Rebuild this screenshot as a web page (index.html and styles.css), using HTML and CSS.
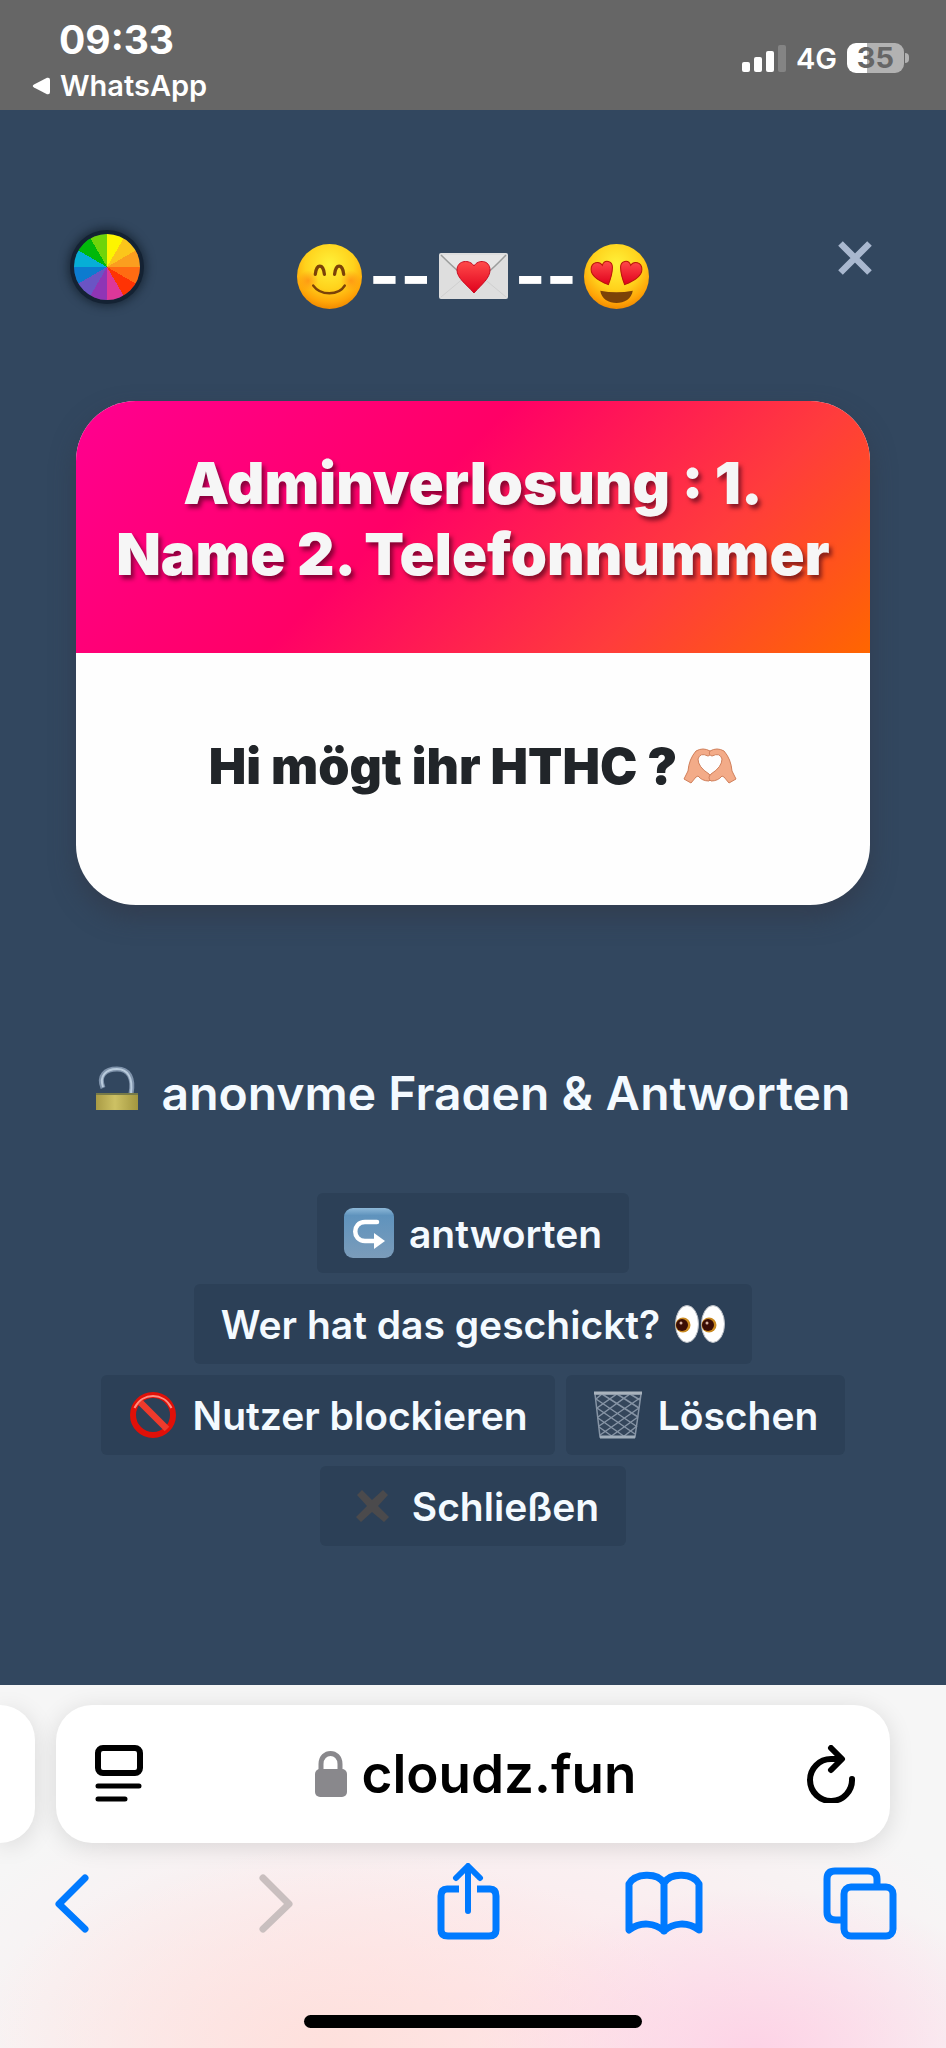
FILE: index.html
```html
<!DOCTYPE html>
<html lang="de">
<head>
    <meta charset="UTF-8">
    <meta name="viewport" content="width=device-width, initial-scale=1.0">
    <title>cloudz.fun</title>
    <link rel="stylesheet" href="styles.css">
</head>
<body>
    <!-- status bar -->
    <div class="status">
        <div class="status-left">
            <div class="time">09:33</div>
            <a class="back-app" href="#">
                <svg width="18" height="18" viewBox="0 0 18 18"><path d="M2 7.5 15 .8Q18 0 18 3v12q0 3-3 2.200L2 10.500Q-.5 9 2 7.500z" fill="#fff"/></svg>
                <span>WhatsApp</span>
            </a>
        </div>
        <div class="status-right">
            <svg width="44" height="27" viewBox="0 0 44 27" fill="#fff">
                <rect x="0" y="17" width="8" height="10" rx="2"/>
                <rect x="12" y="12" width="8" height="15" rx="2"/>
                <rect x="24" y="6" width="8" height="21" rx="2"/>
                <rect x="36" y="0" width="8" height="27" rx="2" opacity=".2"/>
            </svg>
            <span>4G</span>
            <div class="battery"><span>35</span></div>
        </div>
    </div>

    <main>
        <header>
            <button class="wheel" aria-label="Farbe"></button>
            <h1>
                <svg width="65" height="65" viewBox="0 0 64 64">
                    <defs>
                        <radialGradient id="face" cx=".5" cy=".32" r=".68">
                            <stop offset="0" stop-color="#fff23a"/>
                            <stop offset=".55" stop-color="#ffd21c"/>
                            <stop offset=".85" stop-color="#ffa508"/>
                            <stop offset="1" stop-color="#f08a00"/>
                        </radialGradient>
                        <radialGradient id="cheek">
                            <stop offset="0" stop-color="#ff7a10" stop-opacity=".6"/>
                            <stop offset="1" stop-color="#ff7a10" stop-opacity="0"/>
                        </radialGradient>
                        <linearGradient id="heart" x1="0" y1="0" x2="0" y2="1">
                            <stop offset="0" stop-color="#ff4a4a"/>
                            <stop offset="1" stop-color="#e0001c"/>
                        </linearGradient>
                    </defs>
                    <circle cx="32" cy="32" r="32" fill="url(#face)"/>
                    <circle cx="11" cy="36" r="10" fill="url(#cheek)"/>
                    <circle cx="53" cy="36" r="10" fill="url(#cheek)"/>
                    <path d="M18 30C19 19 26 19 27 30M37 30C38 19 45 19 46 30" fill="none" stroke="#7b4208" stroke-width="3.200" stroke-linecap="round"/>
                    <path d="M16 41C23 51 41 51 47 41" fill="none" stroke="#7b4208" stroke-width="2.500" stroke-linecap="round"/>
                </svg>
                <span>--</span>
                <svg width="69" height="46" viewBox="0 0 69 46">
                    <rect width="69" height="46" rx="2" fill="#dedede"/>
                    <path d="M2 44 26 24M67 44 43 24" stroke="#cfcfcf" fill="none"/>
                    <path d="M2 2Q28 28 35 28T67 2" fill="#e6e6e6" stroke="#9b9d9c" stroke-width="1.500"/>
                    <path d="M35 40C27 31 18 25 18 17 18 7 31 6 35 13 39 6 51 7 51 17 51 25 43 31 35 40z" fill="url(#heart)" stroke="#c80d22"/>
                </svg>
                <span>--</span>
                <svg width="65" height="65" viewBox="0 0 64 64">
                    <circle cx="32" cy="32" r="32" fill="url(#face)"/>
                    <path d="M24 40C14 36 7 31 7 25 7 18 15 16 18 21 20 15 28 16 28 23 28 30 26 35 24 40z" fill="url(#heart)" stroke="#b8160a"/>
                    <path d="M40 40C50 36 57 31 57 25 57 18 49 16 46 21 44 15 36 16 36 23 36 30 38 35 40 40z" fill="url(#heart)" stroke="#b8160a"/>
                    <path d="M16 46Q32 49 48 46C46 62 18 62 16 46z" fill="#7b4208"/>
                </svg>
            </h1>
            <button class="close" aria-label="Schließen">
                <svg width="34" height="34" viewBox="0 0 34 34"><path d="M2.500 2.500 31.500 31.500M31.500 2.500 2.500 31.500" stroke="#a9b8cf" stroke-width="6.500"/></svg>
            </button>
        </header>

        <section class="card">
            <h2>Adminverlosung : 1. Name 2. Telefonnummer</h2>
            <p>
                <span>Hi mögt ihr HTHC ?</span>
                <svg width="54" height="36" viewBox="0 0 54 36" fill="#f3ab88" stroke="#d07f5a" stroke-width="1">
                    <path d="M1 31 5 23Q6 11 13 3 20-1 27 3 29 7 25 8 17 4 15 11 15 19 26 26 30 30 26 33 19 33 15 28L13 29 8 35z"/>
                    <path d="M53 31 49 23Q48 11 41 3 34-1 27 3 25 7 29 8 37 4 39 11 39 19 28 26 24 30 28 33 35 33 39 28L41 29 46 35z"/>
                </svg>
            </p>
        </section>

        <div class="ticker">
            <svg width="42" height="62" viewBox="0 0 42 62">
                <defs>
                    <linearGradient id="brass">
                        <stop offset="0" stop-color="#a99b45"/>
                        <stop offset=".45" stop-color="#cdc164"/>
                        <stop offset="1" stop-color="#a2963f"/>
                    </linearGradient>
                </defs>
                <path d="M7 22C2 10 9 3 21 3S38 12 35 28" fill="none" stroke="#7f93ab" stroke-width="5"/>
                <path d="M7 21C3 10 10 3 21 3S37 12 35 27" fill="none" stroke="#b9cbdc" stroke-width="2"/>
                <rect y="27" width="42" height="34" rx="2" fill="url(#brass)"/>
                <path d="M0 28H42" stroke="#777a48" stroke-width="2"/>
            </svg>
            <span>anonyme Fragen &amp; Antworten</span>
        </div>

        <div class="actions">
            <button>
                <svg width="50" height="50" viewBox="0 0 50 50">
                    <defs>
                        <linearGradient id="tile" x1="0" y1="0" x2="0" y2="1">
                            <stop offset="0" stop-color="#8db8d8"/>
                            <stop offset=".15" stop-color="#5f93bd"/>
                            <stop offset="1" stop-color="#7b9cba"/>
                        </linearGradient>
                    </defs>
                    <rect width="50" height="50" rx="9" fill="url(#tile)"/>
                    <path d="M33 14H21C8 14 8 33 21 33H31" fill="none" stroke="#fff" stroke-width="4.500" stroke-linecap="round"/>
                    <path d="M30 25 41 33 30 41z" fill="#fff"/>
                </svg>
                <span>antworten</span>
            </button>
            <button>
                <span>Wer hat das geschickt?</span>
                <svg width="50" height="38" viewBox="0 0 50 38">
                    <ellipse cx="12" cy="19" rx="11.500" ry="18.500" fill="#fff" stroke="#b9bdc4"/>
                    <ellipse cx="38" cy="19" rx="11.500" ry="18.500" fill="#fff" stroke="#b9bdc4"/>
                    <circle cx="8" cy="20" r="7.500" fill="#c98a22"/><circle cx="7" cy="20" r="6" fill="#3a0d05"/>
                    <circle cx="34" cy="20" r="7.500" fill="#c98a22"/><circle cx="33" cy="20" r="6" fill="#3a0d05"/>
                    <circle cx="6" cy="18" r="1.500" fill="#d9b3a0"/><circle cx="32" cy="18" r="1.500" fill="#d9b3a0"/>
                </svg>
            </button>
            <button>
                <svg width="50" height="50" viewBox="0 0 50 50" fill="none">
                    <circle cx="25" cy="25" r="20" stroke="#e01008" stroke-width="6"/>
                    <path d="M11 11 39 39" stroke="#ef3a2c" stroke-width="6.500"/>
                    <path d="M6.500 18C14 2 36 2 43.500 18" stroke="#ff8c80" stroke-width="2"/>
                </svg>
                <span>Nutzer blockieren</span>
            </button>
            <button>
                <svg width="50" height="50" viewBox="0 0 50 50" fill="none" stroke="#8694a5" stroke-width="1.500">
                    <path d="M2 4 7 47H42L48 4z" fill="#34465b"/>
                    <path d="M3 9 9 4 45 27M4 18 24 4 46 18M5 27 37 4 47 10M6 36 47 8M7 45 46 18M17 47 45 27M30 47 44 36M6 37 20 47M5 28 32 47M4 18 42 44M3 9 43 36"/>
                    <path d="M1 3H49" stroke="#a9b3bd" stroke-width="3"/>
                    <path d="M7 47H42" stroke="#a0adba" stroke-width="3"/>
                </svg>
                <span>Löschen</span>
            </button>
            <button>
                <svg width="50" height="50" viewBox="0 0 50 50"><path d="M10 14 15 9 25 19 36 9 41 14 31 25 42 36 37 41 25 31 14 41 9 36 20 25z" fill="#4b4a4c"/></svg>
                <span>Schließen</span>
            </button>
        </div>
    </main>

    <!-- browser bar -->
    <footer>
        <div class="tabs">
            <div class="tab-prev"></div>
            <div class="address">
                <button aria-label="Seitenmenü">
                    <svg width="50" height="58" viewBox="0 0 50 58" fill="none" stroke="#000" stroke-width="6" stroke-linecap="round">
                        <rect x="4" y="3" width="42" height="25" rx="5"/>
                        <path d="M4 41H45M4 54H31" stroke-width="5"/>
                    </svg>
                </button>
                <a href="#">
                    <svg width="34" height="46" viewBox="0 0 34 46"><path d="M7 20V13C7-1 26-1 26 13V20" fill="none" stroke="#89888c" stroke-width="5"/><rect x="1" y="18" width="32" height="28" rx="5" fill="#89888c"/></svg>
                    <span>cloudz.fun</span>
                </a>
                <button aria-label="Neu laden">
                    <svg width="50" height="58" viewBox="0 0 50 58" fill="none" stroke="#000" stroke-width="6" stroke-linecap="round" stroke-linejoin="round">
                        <path d="M46 34A21 21 0 1 1 25 14H34"/>
                        <path d="M25 3 36 14 25 25"/>
                    </svg>
                </button>
            </div>
        </div>
        <nav>
            <button aria-label="Zurück"><svg width="80" height="80" viewBox="0 0 80 80"><path d="M53 15 27 41 53 66"/></svg></button>
            <button aria-label="Vorwärts" disabled><svg width="80" height="80" viewBox="0 0 80 80"><path d="M34 15 60 41 34 66"/></svg></button>
            <button aria-label="Teilen"><svg width="80" height="80" viewBox="0 0 80 80"><path d="M33 26H21Q15 26 15 33V67Q15 73 22 73H63Q70 73 70 67V33Q70 26 64 26H51" stroke-linecap="butt"/><path d="M42 48V4M30 15 42 3 54 15" stroke-width="6"/></svg></button>
            <button aria-label="Lesezeichen"><svg width="80" height="80" viewBox="0 0 80 80"><path d="M41 68C32 60 18 58 6 67V21C12 10 34 9 41 20 48 9 70 10 76 21V67C64 58 50 60 41 68zM41 20V68"/></svg></button>
            <button aria-label="Tabs"><svg width="80" height="80" viewBox="0 0 80 80"><path d="M22 57H16Q7 57 7 49V16Q7 8 15 8H48Q57 8 57 16V24" stroke-linecap="butt"/><rect x="24" y="24" width="49" height="49" rx="7"/></svg></button>
        </nav>
        <div class="home"></div>
    </footer>
</body>
</html>
```
FILE: styles.css
```css
* {margin: 0; padding: 0; box-sizing: border-box;}
body {min-height: 100vh; display: flex; flex-direction: column; background-color: #32475f; color: #f4faff; font-family: Inter, "Liberation Sans", sans-serif; overflow-x: hidden;}
button {background: none; border: none; font: inherit; color: inherit; cursor: pointer;}
a {color: inherit; text-decoration: none;}
svg {display: block; flex: none;}

/* status bar */
.status {height: 110px; padding: 16px 42px 0 32px; display: flex; justify-content: space-between; background-color: #666666; color: #ffffff; font-weight: 600; font-size: 29px;}
.status .time {padding-left: 27px; font-size: 39px; font-weight: 700; line-height: 48px;}
.status .back-app {display: flex; align-items: center; gap: 10px; line-height: 44px;}
.status-right {height: 84px; display: flex; align-items: center; gap: 10px;}
.battery {position: relative; width: 57px; height: 30px; border-radius: 9px; background: linear-gradient(90deg, #ffffff 35%, #b2b2b2 35%); color: #666666; font-weight: 700; line-height: 30px; text-align: center;}
.battery::after {content: ""; position: absolute; left: 58px; top: 10px; width: 4px; height: 10px; border-radius: 0 4px 4px 0; background-color: #b2b2b2;}

main {flex: 1; padding: 122px 76px 80px;}
header {margin: 0 -2px; display: grid; grid-template-columns: 1fr auto 1fr; align-items: start;}
.wheel {width: 66px; height: 66px; margin-top: 2px; border-radius: 50%; box-shadow: 0 0 0 4px #142233, 0 0 10px 6px rgba(10, 20, 30, 0.6); background: conic-gradient(#fdf500 30deg, #fbc51b 30deg 60deg, #fb9e1f 60deg 90deg, #ff6b12 90deg 120deg, #ff3304 120deg 150deg, #dd3799 150deg 180deg, #8f35b5 180deg 210deg, #6a54c4 210deg 240deg, #0c7bcf 240deg 270deg, #06aed6 270deg 300deg, #00b80a 300deg 330deg, #6fd40a 330deg);}
h1 {height: 88px; display: flex; align-items: center; gap: 7px; color: #ffffff; font-size: 67px; font-weight: 700; line-height: 88px;}
.close {height: 52px; display: flex; align-items: center; justify-self: end;}

.card {margin-top: 81px; border-radius: 60px; overflow: hidden; background-color: #fefefe; box-shadow: 0 12px 24px rgba(50, 55, 70, 0.6); text-align: center;}
.card h2 {min-height: 252px; padding: 47px 30px 63px; background: linear-gradient(135deg, #ff0090, #ff0066 42%, #ff3c3c 74%, #ff6600); color: #f6f6f6; font-size: 58px; font-weight: 900; line-height: 71px; text-shadow: 3px 4px 4px rgba(60, 0, 20, 0.6);}
.card p {height: 252px; padding-bottom: 26px; display: flex; justify-content: center; align-items: center; gap: 6px; color: #212529; font-size: 50px; font-weight: 900;}

/* the line is cut at the baseline */
.ticker {height: 50px; margin-top: 155px; display: flex; justify-content: center; align-items: flex-start; gap: 24px; overflow: hidden; font-size: 48px; font-weight: 600; line-height: 68px; white-space: nowrap;}
.ticker svg {margin-top: 6px;}

.actions {margin-top: 83px; display: flex; flex-wrap: wrap; justify-content: center; gap: 11px;}
.actions button {height: 80px; padding: 0 27px; display: flex; align-items: center; gap: 15px; border-radius: 6px; background-color: #2c4057; font-size: 39px; font-weight: 600;}

/* browser bar */
footer {height: 363px; display: flex; flex-direction: column; padding-top: 20px; background: radial-gradient(ellipse 280px 160px at 80% 100%, #fdd3e6, transparent), radial-gradient(ellipse 360px 200px at 35% 100%, #fee0dc, transparent), radial-gradient(ellipse 60% 70% at 50% 90%, #ffe6ea, transparent), #f6f6f6;}
.tabs {display: flex; gap: 21px; padding-right: 56px;}
.tab-prev {width: 35px; border-radius: 0 36px 36px 0; background-color: #ffffff; box-shadow: 0 4px 24px rgba(0, 0, 0, 0.12);}
.address {flex: 1; height: 138px; padding: 0 34px 0 38px; display: flex; align-items: center; justify-content: space-between; border-radius: 36px; background-color: #ffffff; color: #000000; box-shadow: 0 4px 24px rgba(0, 0, 0, 0.12);}
.address a {display: flex; align-items: center; gap: 14px; font-size: 53px; font-weight: 600;}
nav {padding: 20px 46px 0 32px; display: flex; justify-content: space-between;}
nav button {color: #007aff;}
nav button:disabled {color: #c9bfbf;}
nav svg {fill: none; stroke: currentColor; stroke-width: 7; stroke-linecap: round; stroke-linejoin: round;}
.home {width: 338px; height: 13px; margin: auto auto 20px; border-radius: 7px; background-color: #000000;}
```
